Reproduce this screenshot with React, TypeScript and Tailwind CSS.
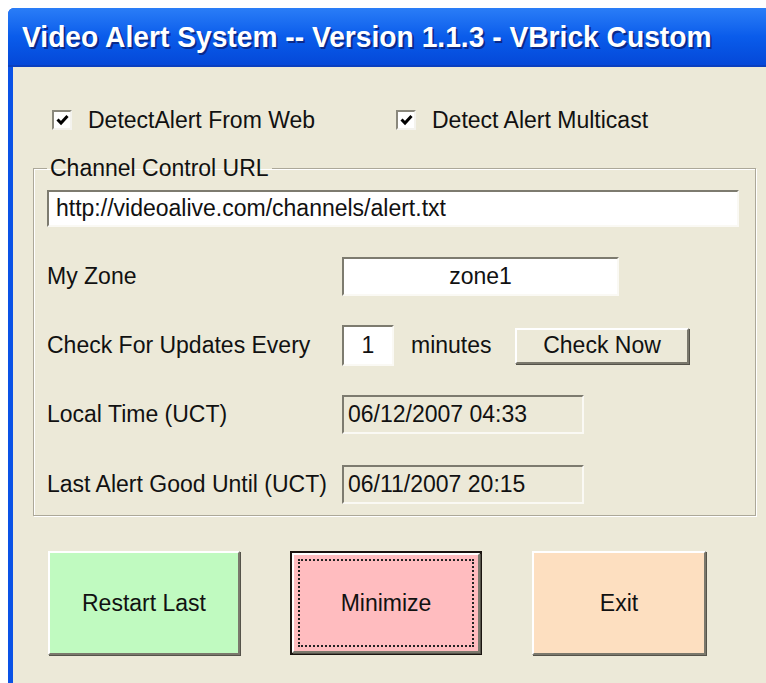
import { ReactNode } from "react"

const ui = "font-['Liberation_Sans',Arial,sans-serif] text-[23px] text-[#111]"

const Check = ({ label }: { label: string }) => (
    <label className="flex items-center gap-4">
        <span className="w-[20px] h-[20px] bg-white border-2 border-t-[#8a887c] border-l-[#8a887c] border-r-[#f4f3ee] border-b-[#f4f3ee] flex items-center justify-center">
            <svg width="13" height="12" viewBox="0 0 13 12">
                <path d="M1.5 5.5 L5 9 L11.5 2" stroke="#000" strokeWidth="3" fill="none" />
            </svg>
        </span>
        <span>{label}</span>
    </label>
)

// sunken edit box, classic 3D look
const Field = ({ children, className }: { children: ReactNode, className: string }) => (
    <div className={`flex items-center border-2 border-t-[#7d7b6f] border-l-[#7d7b6f] border-r-[#faf9f4] border-b-[#faf9f4] ${className}`}>
        {children}
    </div>
)

const Row = ({ label, children }: { label: string, children: ReactNode }) => (
    <div className="flex items-center">
        <span className="w-[295px] shrink-0">{label}</span>
        {children}
    </div>
)

const BigButton = ({ label, color, focused }: { label: string, color: string, focused?: boolean }) => (
    <div className={`h-[104px] ${focused ? "border-2 border-[#1a1410]" : ""}`}>
        <div className={`h-full flex items-center justify-center border-2 border-t-white border-l-white border-r-[#7a786c] border-b-[#7a786c] shadow-[1px_1px_0_#55534a] ${color}`}>
            {focused ? (
                <div className="w-[calc(100%-8px)] h-[calc(100%-8px)] border-2 border-dotted border-[#222] flex items-center justify-center">{label}</div>
            ) : label}
        </div>
    </div>
)

export default function App() {
    return (
        <div className={`w-[766px] h-[683px] bg-white pt-[8px] pl-[8px] overflow-hidden ${ui}`}>
            <div className="h-full bg-[#0a52e6] rounded-tl-[6px] flex flex-col">
                <div className="h-[59px] shrink-0 flex items-center pl-[14px] bg-gradient-to-b from-[#2a7df7] via-[#0a5ceb] to-[#0548d8] border-b-2 border-[#0a3fbf] rounded-tl-[6px] whitespace-nowrap">
                    <span className="inline-block origin-left scale-x-[0.94] font-bold text-[30px] text-white [text-shadow:2px_2px_0_#0a2a8a]">
                        Video Alert System -- Version 1.1.3 - VBrick Custom
                    </span>
                </div>
                <div className="flex-1 ml-[5px] bg-[#ece9d8] pl-[20px] pr-[10px]">
                    <div className="flex h-[106px] items-center pl-[19px]">
                        <div className="w-[344px]"><Check label="DetectAlert From Web" /></div>
                        <Check label="Detect Alert Multicast" />
                    </div>
                    <fieldset className="border border-[#aca899] shadow-[inset_1px_1px_0_#fff,1px_1px_0_#fff] px-[13px] pr-[16px] pb-[11px] -mt-[18px]">
                        <legend className="px-[3px] leading-[26px]">Channel Control URL</legend>
                        <Field className="mt-[9px] h-[37px] bg-white pl-[7px]">http://videoalive.com/channels/alert.txt</Field>
                        <div className="flex flex-col mt-[30px]">
                            <Row label="My Zone">
                                <Field className="w-[277px] h-[39px] bg-white justify-center">zone1</Field>
                            </Row>
                            <div className="mt-[29px]">
                                <Row label="Check For Updates Every">
                                    <Field className="w-[52px] h-[41px] bg-white justify-center">1</Field>
                                    <span className="ml-[17px] w-[104px]">minutes</span>
                                    <div className="w-[174px] h-[36px] flex items-center justify-center border-2 border-t-white border-l-white border-r-[#7a786c] border-b-[#7a786c] shadow-[1px_1px_0_#55534a] bg-[#ece9d8]">Check Now</div>
                                </Row>
                            </div>
                            <div className="mt-[29px]">
                                <Row label="Local Time (UCT)">
                                    <Field className="w-[242px] h-[39px] pl-[4px]">06/12/2007 04:33</Field>
                                </Row>
                            </div>
                            <div className="mt-[31px]">
                                <Row label="Last Alert Good Until (UCT)">
                                    <Field className="w-[242px] h-[39px] pl-[4px]">06/11/2007 20:15</Field>
                                </Row>
                            </div>
                        </div>
                    </fieldset>
                    <div className="flex mt-[35px] pl-[15px]">
                        <div className="w-[192px]"><BigButton label="Restart Last" color="bg-[#c0fac0]" /></div>
                        <div className="w-[192px] ml-[50px]"><BigButton label="Minimize" color="bg-[#ffbcbf]" focused /></div>
                        <div className="w-[174px] ml-[50px]"><BigButton label="Exit" color="bg-[#fddfc0]" /></div>
                    </div>
                </div>
            </div>
        </div>
    )
}
